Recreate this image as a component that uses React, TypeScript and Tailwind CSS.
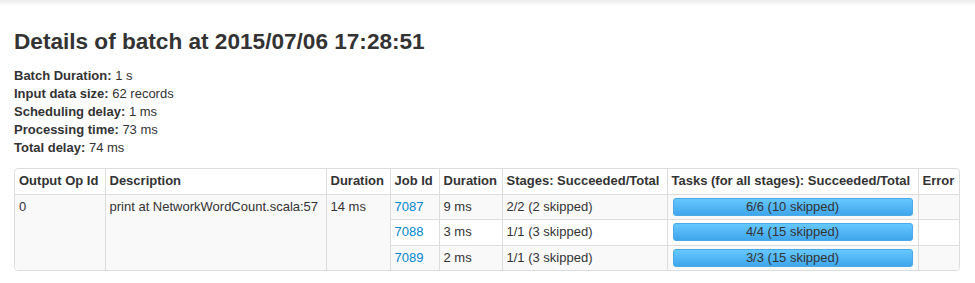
const rows = [
  { job: "7087", dur: "9 ms", stages: "2/2 (2 skipped)", tasks: "6/6 (10 skipped)", bg: "bg-[#f9f9f9]" },
  { job: "7088", dur: "3 ms", stages: "1/1 (3 skipped)", tasks: "4/4 (15 skipped)", bg: "bg-white" },
  { job: "7089", dur: "2 ms", stages: "1/1 (3 skipped)", tasks: "3/3 (15 skipped)", bg: "bg-[#f9f9f9]" },
];

const info = [
  ["Batch Duration:", "1 s"],
  ["Input data size:", "62 records"],
  ["Scheduling delay:", "1 ms"],
  ["Processing time:", "73 ms"],
  ["Total delay:", "74 ms"],
];

export default function App() {
  return (
    <div className="w-[975px] h-[283px] bg-white text-[#333] font-['Liberation_Sans',Arial,sans-serif] overflow-hidden">
      <div className="h-[6px] bg-gradient-to-b from-[#ececec] to-white" />
      <div className="px-[14px]">
        <h3 className="mt-[21px] text-[22.6px] leading-[30px] font-bold text-[#333]">
          Details of batch at 2015/07/06 17:28:51
        </h3>
        <ul className="mt-[10px] text-[13px] leading-[18px]">
          {info.map(([k, v]) => (
            <li key={k}>
              <strong>{k}</strong> {v}
            </li>
          ))}
        </ul>
        <div className="mt-[11px] w-[946px] border border-[#ddd] rounded-[4px] overflow-hidden">
          <table className="w-full border-collapse table-fixed text-[13px] leading-[16.5px]">
            <colgroup>
              <col className="w-[90px]" />
              <col className="w-[221px]" />
              <col className="w-[64px]" />
              <col className="w-[49px]" />
              <col className="w-[63px]" />
              <col className="w-[165px]" />
              <col className="w-[251px]" />
              <col />
            </colgroup>
            <thead>
              <tr className="text-left">
                {["Output Op Id", "Description", "Duration", "Job Id", "Duration", "Stages: Succeeded/Total", "Tasks (for all stages): Succeeded/Total", "Error"].map((h, i) => (
                  <th
                    key={i}
                    className={`px-[4px] py-[4px] font-bold whitespace-nowrap ${i > 0 ? "border-l border-[#ddd]" : ""}`}
                  >
                    {h}
                  </th>
                ))}
              </tr>
            </thead>
            <tbody>
              {rows.map((r, i) => (
                <tr key={r.job}>
                  {i === 0 && (
                    <>
                      <td rowSpan={3} className="align-top px-[4px] py-[4px] border-t border-[#ddd] bg-[#f9f9f9]">0</td>
                      <td rowSpan={3} className="align-top px-[4px] py-[4px] border-t border-l border-[#ddd] bg-[#f9f9f9] whitespace-nowrap">
                        print at NetworkWordCount.scala:57
                      </td>
                      <td rowSpan={3} className="align-top px-[4px] py-[4px] border-t border-l border-[#ddd] bg-[#f9f9f9] whitespace-nowrap">
                        14 ms
                      </td>
                    </>
                  )}
                  <td className={`px-[4px] py-[4px] border-t border-l border-[#ddd] ${r.bg}`}>
                    <a href="#" className="text-[#0088cc]">{r.job}</a>
                  </td>
                  <td className={`px-[4px] py-[4px] border-t border-l border-[#ddd] ${r.bg}`}>{r.dur}</td>
                  <td className={`px-[4px] py-[4px] border-t border-l border-[#ddd] whitespace-nowrap ${r.bg}`}>{r.stages}</td>
                  <td className={`px-[5px] py-[3px] border-t border-l border-[#ddd] ${r.bg}`}>
                    <div className="h-[18px] rounded-[3px] border border-[#4aa9e6] bg-gradient-to-b from-[#66c8ff] to-[#3fa6ec] text-center leading-[16px] text-[#333]">
                      {r.tasks}
                    </div>
                  </td>
                  <td className={`px-[4px] py-[4px] border-t border-l border-[#ddd] ${i === 2 ? "bg-[#f9f9f9]" : r.bg}`} />
                </tr>
              ))}
            </tbody>
          </table>
        </div>
      </div>
    </div>
  );
}
